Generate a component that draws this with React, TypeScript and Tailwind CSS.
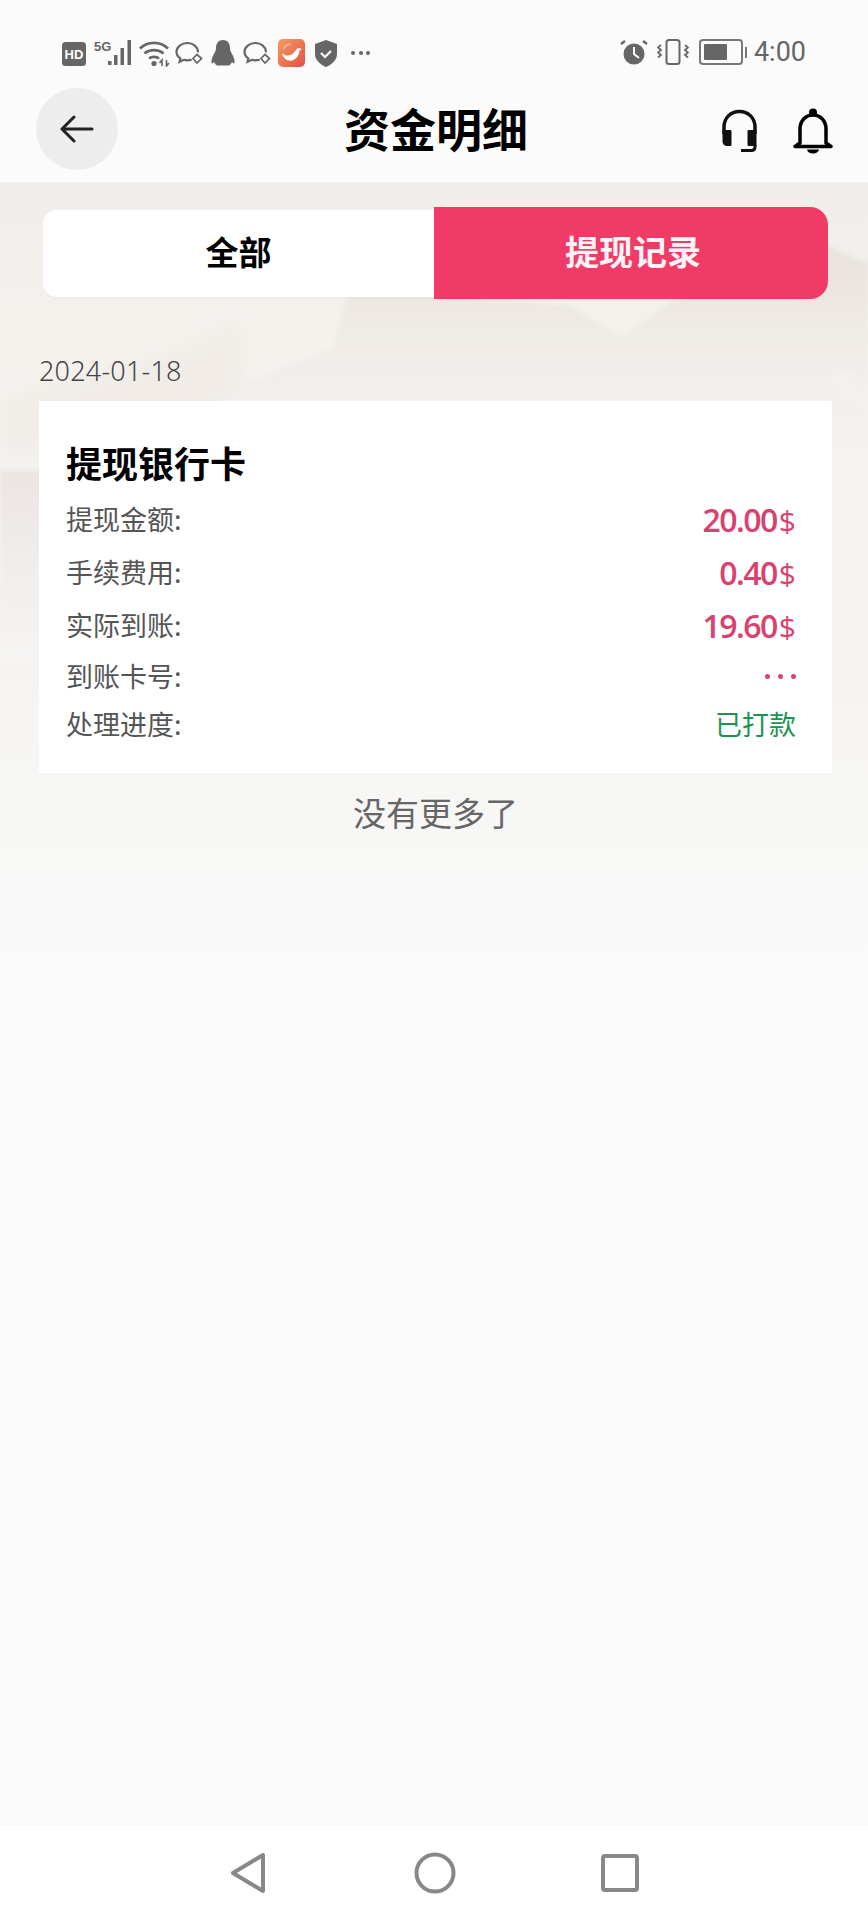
import React from 'react';

const rows = [
  { label: '提现金额:', value: '20.00' },
  { label: '手续费用:', value: '0.40' },
  { label: '实际到账:', value: '19.60' },
];

const ChatIcon = () => (
  <svg width="28" height="26" viewBox="0 0 28 26" fill="none" stroke="#666" strokeWidth="2.200">
    <path d="M12.500 3C6.500 3 1.500 6.800 1.500 11.800c0 2.800 1.500 5 3.800 6.500l-.7 3.500 4.200-2c1.100.3 2.300.5 3.700.5 1.200 0 2.300-.1 3.300-.4" strokeLinecap="round" />
    <path d="M23 11.500C22.300 6.500 18 3 12.500 3" strokeLinecap="round" />
    <path d="M22 14.500l4.500 4-4.500 4.500-4-4.500z" strokeWidth="1.700" />
  </svg>
);

const StatusBar = () => (
  <div className="relative flex h-[82px] items-start justify-between pl-[62px] pr-[62px] pt-[39px]">
    <div className="flex items-center">
      <svg width="24" height="24" viewBox="0 0 24 24" className="mt-[1px]">
        <rect width="24" height="24" y="0" rx="3.500" fill="#666" />
        <text x="12" y="17" textAnchor="middle" fontSize="13" fontWeight="700" fill="#fff" fontFamily="Liberation Sans">HD</text>
      </svg>
      <svg width="42" height="26" viewBox="0 0 42 26" className="ml-[8px]">
        <text x="0" y="11" fontSize="13" fontWeight="700" fill="#666" fontFamily="Liberation Sans">5G</text>
        <rect x="14" y="21" width="3.500" height="4" fill="#666" />
        <rect x="20" y="15" width="3.500" height="10" fill="#666" />
        <rect x="26.500" y="8" width="3.500" height="17" fill="#666" />
        <rect x="33.500" y="0" width="3.500" height="25" fill="#666" />
      </svg>
      <svg width="32" height="27" viewBox="0 0 32 27" fill="none" stroke="#666" strokeWidth="2.800" className="ml-[3px]">
        <path d="M1 8.500C8.500 1 21.500 1 29 8.500" />
        <path d="M5.500 13.500c5-4.500 14-4.500 19 0" />
        <path d="M10 18.500c2.800-2.200 7.200-2.200 10 0" />
        <circle cx="15" cy="23.500" r="2.600" fill="#666" stroke="none" />
        <path d="M23 26v-6l-2.500 3M27.500 20v6l2.500-3" strokeWidth="1.600" />
      </svg>
      <div className="ml-[4px]"><ChatIcon /></div>
      <svg width="24" height="26" viewBox="0 0 24 26" className="ml-[8px]">
        <path d="M12 0c-4.500 0-7 3.500-7 8 0 2-.600 3.500-2 6-1.500 2.500-3 6.500-2.500 9 .500 1 1.500 0 2.500-1 1 2 2 3 3 3.500h12c1-.500 2-1.500 3-3.500 1 1 2 2 2.500 1 .500-2.500-1-6.500-2.500-9-1.400-2.500-2-4-2-6 0-4.500-2.500-8-7-8z" fill="#666" />
      </svg>
      <div className="ml-[8px]"><ChatIcon /></div>
      <div className="ml-[7px] flex h-[28px] w-[27px] items-center justify-center rounded-[5px] bg-gradient-to-br from-[#f39a63] to-[#e34f42]">
        <svg width="24" height="22" viewBox="0 0 24 22" fill="none">
          <path d="M2 11c3.500 3.500 8.500 3.500 12-.5 1.200-1.500 2.500-3.800 4.500-4.500l3.500 1-2.500 1.500C19 15 14 19.500 9 18.500 5.500 18 2.800 15 2 11z" fill="#fff" />
          <path d="M3.500 7C4.800 4 7.500 2.200 10.500 2" stroke="#fff" strokeOpacity="0.450" strokeWidth="1.300" />
        </svg>
      </div>
      <svg width="24" height="27" viewBox="0 0 24 27" className="ml-[9px]">
        <path d="M12 0l11 4v10c0 6-5 10.500-11 13C6 24.500 1 20 1 14V4z" fill="#666" />
        <path d="M7 13l4 4 6-6" fill="none" stroke="#fff" strokeWidth="2.200" />
      </svg>
      <div className="ml-[13px] flex gap-[3.500px]">
        <span className="h-[4px] w-[4px] rounded-full bg-[#666]" />
        <span className="h-[4px] w-[4px] rounded-full bg-[#666]" />
        <span className="h-[4px] w-[4px] rounded-full bg-[#666]" />
      </div>
    </div>
    <div className="flex items-center">
      <svg width="28" height="26" viewBox="0 0 28 26">
        <circle cx="14" cy="15" r="10.500" fill="#666" />
        <path d="M14 8v7l5 4" fill="none" stroke="#fff" strokeWidth="2" />
        <path d="M1 5l4-3M27 5l-4-3" stroke="#666" strokeWidth="2.400" />
      </svg>
      <svg width="32" height="26" viewBox="0 0 32 26" fill="none" stroke="#666" strokeWidth="1.800" className="ml-[9px]">
        <rect x="9.500" y="1" width="13" height="24" rx="2.500" strokeWidth="2" />
        <path d="M4 6l-3 2.500 3 2.500-3 2.500 3 2.500-3 2.500M28 6l3 2.500-3 2.500 3 2.500-3 2.500 3 2.500" />
      </svg>
      <div className="ml-[10px] flex items-center">
        <div className="flex h-[26px] w-[44px] items-center rounded-[4px] border-2 border-[#777] p-[3px]">
          <div className="h-full w-[23px] rounded-[1px] bg-[#666]" />
        </div>
        <div className="ml-[2px] h-[11px] w-[2px] bg-[#777]" />
      </div>
      <span className="ml-[7px] font-['Roboto',sans-serif] text-[27px] leading-[26px] text-[#666]">4:00</span>
    </div>
  </div>
);

const Header = () => (
  <div className="relative flex h-[100px] items-center justify-center">
    <div className="absolute left-[36px] top-[6px] flex h-[82px] w-[82px] items-center justify-center rounded-full bg-[#ededed]">
      <svg width="34" height="28" viewBox="0 0 34 28" fill="none" stroke="#222" strokeWidth="3" strokeLinecap="round" strokeLinejoin="round">
        <path d="M2 14h30M14 2L2 14l12 12" />
      </svg>
    </div>
    <h1 className="-mt-[11px] ml-[4px] text-[46px] font-bold leading-none text-black">资金明细</h1>
    <svg width="37" height="44" viewBox="0 0 37 44" fill="none" className="absolute left-[721px] top-[27px]">
      <path d="M3 25V18C3 9 9.500 2.500 18.500 2.500S34 9 34 18v7" stroke="#111" strokeWidth="3.500" />
      <path d="M1.500 21H9c1 0 1.500.500 1.500 1.500v13c0 1-.500 1.500-1.500 1.500H6c-2.500 0-4.500-2-4.500-4.500zM35.500 21H28c-1 0-1.500.500-1.500 1.500v13c0 1 .500 1.500 1.500 1.500h7.500z" fill="#111" />
      <path d="M34 36v2c0 2-1 3.500-3.500 3.500H20" stroke="#111" strokeWidth="3" />
    </svg>
    <svg width="40" height="46" viewBox="0 0 40 46" className="absolute left-[793px] top-[26px]" fill="none">
      <circle cx="20" cy="4.500" r="4" fill="#000" />
      <path d="M7 35V21C7 13 12.500 7 20 7s13 6 13 14v14l5 3.500H2z" stroke="#000" strokeWidth="3.500" strokeLinejoin="round" />
      <path d="M14 41.500h12c-.500 2.500-3 4-6 4s-5.500-1.500-6-4z" fill="#000" />
    </svg>
  </div>
);

// viewBox uses page coordinates so the ridges can be read straight off the screenshot
const MountainBg = () => (
  <svg className="absolute left-0 top-0 h-[800px] w-full" viewBox="0 182 868 800" preserveAspectRatio="none">
    <defs>
      <linearGradient id="sky" x1="0" y1="0" x2="0" y2="1">
        <stop offset="0" stopColor="#f0edea" />
        <stop offset="0.2" stopColor="#f5f2ee" />
        <stop offset="0.55" stopColor="#f5f3f0" />
        <stop offset="0.85" stopColor="#f8f8f7" />
        <stop offset="1" stopColor="#fafafa" />
      </linearGradient>
      <linearGradient id="ridge" x1="0" y1="0" x2="0" y2="1">
        <stop offset="0" stopColor="#e8e2dc" />
        <stop offset="0.45" stopColor="#f1ece8" />
        <stop offset="1" stopColor="#f5f3f1" />
      </linearGradient>
      <linearGradient id="blush" x1="0" y1="0" x2="0" y2="1">
        <stop offset="0" stopColor="#ebe5e2" />
        <stop offset="1" stopColor="#f6f5f4" />
      </linearGradient>
      <filter id="soft"><feGaussianBlur stdDeviation="2" /></filter>
      <filter id="wide"><feGaussianBlur stdDeviation="8" /></filter>
    </defs>
    <rect x="0" y="182" width="868" height="800" fill="url(#sky)" />
    <path d="M0 400C60 375 110 370 160 355 190 345 210 335 240 320L250 450H0z" fill="#efeae6" fillOpacity="0.700" filter="url(#wide)" />
    <path d="M351 285L332 348C300 362 278 365 206 406L150 470H868V258L862 262 830 247 670 302 623 336 570 306z" fill="url(#ridge)" filter="url(#soft)" />
    <path d="M150 470H868V700H150z" fill="#f5f3f1" filter="url(#wide)" />
    <path d="M0 470H70V660H0z" fill="url(#blush)" filter="url(#soft)" />
    <path d="M832 365L868 395V405L832 385z" fill="#f6f3ef" filter="url(#wide)" />
  </svg>
);

const Tabs = () => (
  <div className="flex items-center pl-[43px] pr-[40px]">
    <div className="flex h-[87px] w-[391px] items-center justify-center rounded-l-[14px] bg-white pb-[2px] text-[33px] font-bold text-black shadow-[0_2px_2px_rgba(0,0,0,0.02)]">全部</div>
    <div className="flex h-[92px] flex-1 items-center justify-center rounded-r-[18px] bg-[#ef3b66] pb-[6px] pl-[4px] text-[34px] font-bold text-[#fdf2f5]">提现记录</div>
  </div>
);

const Card = () => (
  <div className="ml-[39px] h-[372px] w-[793px] bg-white pl-[27px] pr-[36px] pt-[37px]">
    <div className="text-[36px] font-bold leading-[48px] text-black">提现银行卡</div>
    <div className="mt-[7px] flex flex-col">
      {rows.map((r) => (
        <div key={r.label} className="flex h-[53px] items-center justify-between">
          <span className="text-[27px] text-[#555]">{r.label}</span>
          <span className="flex items-baseline font-['Open_Sans',sans-serif] text-[32px] font-semibold tracking-[-1.5px] text-[#d9416f]">
            {r.value}
            <span className="ml-[2px] text-[30px] font-normal tracking-normal">$</span>
          </span>
        </div>
      ))}
      <div className="flex h-[48px] items-center justify-between">
        <span className="text-[27px] text-[#555]">到账卡号:</span>
        <span className="flex gap-[8px]">
          <i className="h-[5px] w-[5px] rounded-full bg-[#d9416f]" />
          <i className="h-[5px] w-[5px] rounded-full bg-[#d9416f]" />
          <i className="h-[5px] w-[5px] rounded-full bg-[#d9416f]" />
        </span>
      </div>
      <div className="flex h-[48px] items-center justify-between">
        <span className="text-[27px] text-[#555]">处理进度:</span>
        <span className="text-[27px] text-[#1a9550]">已打款</span>
      </div>
    </div>
  </div>
);

const NavBar = () => (
  <div className="flex h-[94px] items-center justify-center bg-white">
    <svg width="36" height="42" viewBox="0 0 36 42" fill="none" stroke="#888" strokeWidth="4" strokeLinejoin="round">
      <path d="M33 3v36L3 21z" />
    </svg>
    <svg width="42" height="42" viewBox="0 0 42 42" fill="none" stroke="#888" strokeWidth="4" className="ml-[148px]">
      <circle cx="21" cy="21" r="18.500" />
    </svg>
    <svg width="38" height="38" viewBox="0 0 38 38" fill="none" stroke="#888" strokeWidth="4" strokeLinejoin="round" className="ml-[145px]">
      <rect x="2" y="2" width="34" height="34" rx="2" />
    </svg>
  </div>
);

export default function App() {
  return (
    <div className="flex h-[1920px] w-[868px] flex-col overflow-hidden bg-[#fafafa] font-['Noto_Sans_CJK_SC','Noto_Sans',sans-serif]">
      <div className="h-[182px] bg-[#fbfbfb]">
        <StatusBar />
        <Header />
      </div>
      <div className="relative flex-1">
        <MountainBg />
        <div className="relative pt-[25px]">
          <Tabs />
          <div className="mt-[57px] pl-[39px] font-['Noto_Sans',sans-serif] text-[27px] tracking-[0.2px] font-light leading-[30px] text-[#444]">2024-01-18</div>
          <div className="mt-[15px]">
            <Card />
          </div>
          <div className="mt-[17px] pl-[3px] text-center text-[33px] leading-[44px] text-[#666]">没有更多了</div>
        </div>
      </div>
      <NavBar />
    </div>
  );
}
